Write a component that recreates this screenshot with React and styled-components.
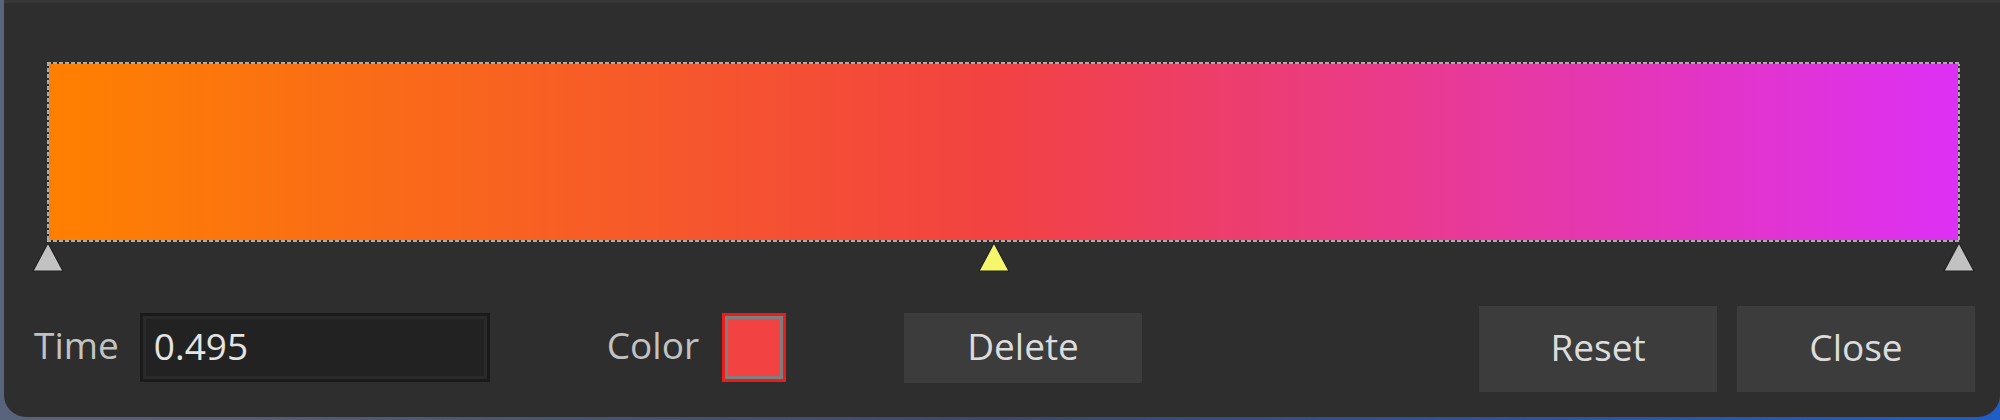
import React from "react";
import styled, { createGlobalStyle } from "styled-components";

const Global = createGlobalStyle`
  html, body { margin: 0; padding: 0; }
  body {
    width: 2000px;
    height: 420px;
    overflow: hidden;
    background: linear-gradient(90deg, #58637c 0%, #3a4a70 50%, #1f5ec6 100%);
    font-family: "Open Sans", "Noto Sans", sans-serif;
  }
`;

const Panel = styled.div`
  box-sizing: border-box;
  margin-left: 4px;
  width: 1996px;
  height: 417px;
  background: #2e2e2e;
  border-top: 3px solid #373737;
  border-radius: 0 0 22px 22px;
  padding: 59px 0 0 43px;
  display: flex;
  flex-direction: column;
`;

const GradientBox = styled.div`
  box-sizing: border-box;
  width: 1913px;
  height: 180px;
  padding: 2px;
  background:
    repeating-linear-gradient(90deg, #ababab 0 4px, #2e2e2e 4px 6px) top left / 100% 2px no-repeat,
    repeating-linear-gradient(90deg, #ababab 0 4px, #2e2e2e 4px 6px) bottom left / 100% 2px no-repeat,
    repeating-linear-gradient(180deg, #ababab 0 4px, #2e2e2e 4px 6px) top left / 2px 100% no-repeat,
    repeating-linear-gradient(180deg, #ababab 0 4px, #2e2e2e 4px 6px) top right / 2px 100% no-repeat;
`;

const Gradient = styled.div`
  width: 100%;
  height: 100%;
  background: linear-gradient(90deg, #ff8000 0%, #fd7c06 4%, #f24242 49.5%, #dd30f5 100%);
`;

const Track = styled.div`
  position: relative;
  width: 1911px;
  height: 30px;
  margin-left: 1px;
`;

const Marker = styled.svg`
  position: absolute;
  top: 0;
  width: 32px;
  height: 30px;
  transform: translateX(-50%);
`;

const Stop = ({ t, selected }) => (
  <Marker viewBox="0 0 32 30" style={{ left: `${t * 100}%` }}>
    <polygon
      points="16,1 31,29 1,29"
      fill={selected ? "#f6f66c" : "#c2c2c2"}
      stroke="#222"
      strokeWidth="1.2"
      strokeLinejoin="round"
    />
  </Marker>
);

const Controls = styled.div`
  display: flex;
  align-items: center;
  height: 86px;
  margin: 34px 0 0 -13px;
  padding-right: 25px;
`;

const Label = styled.span`
  font-size: 37px;
  color: #c2c2c2;
  margin-right: ${(p) => p.$gap}px;
  margin-top: -9px;
`;

const TimeInput = styled.div`
  box-sizing: border-box;
  width: 350px;
  height: 69px;
  margin-top: -3px;
  border: 3px solid #1a1a1a;
  background: #222222;
  box-shadow: inset 0 0 0 3px #2a2a2a;
  padding: 0 0 5px 11px;
  display: flex;
  align-items: center;
  font-size: 37px;
  color: #e4e4e4;
  margin-right: 117px;
`;

const Swatch = styled.div`
  box-sizing: border-box;
  width: 64px;
  height: 69px;
  margin-top: -4px;
  border: 3px solid #ee1b1b;
  box-shadow: inset 0 0 0 3px #7e7e7e;
  background: ${(p) => p.$color};
  margin-right: 118px;
`;

const Button = styled.button`
  box-sizing: border-box;
  width: 238px;
  height: ${(p) => p.$h}px;
  margin-top: ${(p) => (p.$h < 80 ? -3 : 0)}px;
  border: none;
  background: #3c3c3c;
  color: #dcdcdc;
  font-family: inherit;
  font-size: 37px;
  padding: 0 0 5px;
  margin-left: ${(p) => p.$ml || 0}px;
`;

const Spacer = styled.div`
  flex: 1;
`;

export default function App() {
  return (
    <>
      <Global />
      <Panel>
        <GradientBox>
          <Gradient />
        </GradientBox>
        <Track>
          <Stop t={0} />
          <Stop t={0.495} selected />
          <Stop t={1} />
        </Track>
        <Controls>
          <Label $gap={21}>Time</Label>
          <TimeInput>0.495</TimeInput>
          <Label $gap={23}>Color</Label>
          <Swatch $color="#f24242" />
          <Button $h={70}>Delete</Button>
          <Spacer />
          <Button $h={86}>Reset</Button>
          <Button $h={86} $ml={20}>Close</Button>
        </Controls>
      </Panel>
    </>
  );
}
